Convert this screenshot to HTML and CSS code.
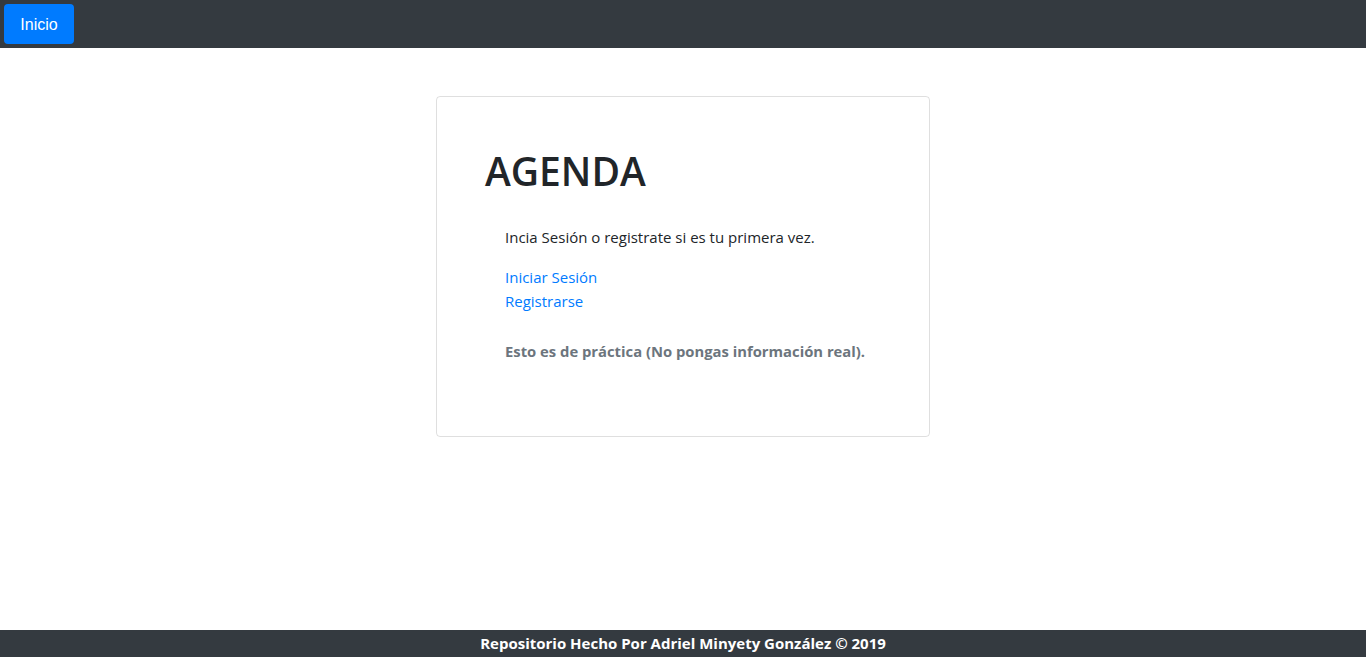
FILE: index.html
```html
<!DOCTYPE html>
<html lang="es">
<head>
<meta charset="utf-8">
<title>Agenda</title>
<link rel="stylesheet" href="styles.css">
</head>
<body>
<nav class="navbar">
  <button class="btn-inicio" type="button">Inicio</button>
</nav>
<main class="main">
  <div class="card">
    <h1 class="title">AGENDA</h1>
    <div class="content">
      <p class="lead-text">Incia Sesión o registrate si es tu primera vez.</p>
      <div class="links">
        <a href="#" class="link">Iniciar Sesión</a>
        <a href="#" class="link">Registrarse</a>
      </div>
      <p class="note">Esto es de práctica (No pongas información real).</p>
    </div>
  </div>
</main>
<footer class="footer">Repositorio Hecho Por Adriel Minyety González © 2019</footer>
</body>
</html>
```
FILE: styles.css
```css
* { box-sizing: border-box; }
html, body { height: 100%; }
body {
  margin: 0;
  font-family: "Open Sans", "Noto Sans", sans-serif;
  font-size: 15px;
  line-height: 24px;
  color: #212529;
  background: #fff;
  display: flex;
  flex-direction: column;
}
.navbar {
  height: 48px;
  background: #343a40;
  padding: 4px;
  display: flex;
  align-items: flex-start;
}
.btn-inicio {
  height: 40px;
  width: 70px;
  border: none;
  border-radius: 4px;
  background: #007bff;
  color: #fff;
  font-family: "Liberation Sans", Arial, sans-serif;
  font-size: 16px;
  padding: 2px 0 0 0;
}
.main {
  flex: 1;
  display: flex;
  justify-content: center;
  padding-top: 48px;
}
.card {
  width: 494px;
  height: 341px;
  border: 1px solid rgba(0,0,0,.125);
  border-radius: 4px;
  padding: 50px 48px 0 48px;
}
.title {
  margin: 0 0 30px 0;
  font-size: 39px;
  line-height: 48px;
  font-weight: 600;
}
.content { padding-left: 20px; }
.lead-text { margin: 0 0 16px 0; }
.links { display: flex; flex-direction: column; margin-bottom: 26px; }
.link { color: #007bff; text-decoration: none; align-self: flex-start; }
.note { margin: 0; font-weight: 700; color: #6c757d; font-size: 14.8px; }
.footer {
  height: 27px;
  background: #343a40;
  color: #fff;
  font-weight: 700;
  text-align: center;
  line-height: 27px;
}
```
